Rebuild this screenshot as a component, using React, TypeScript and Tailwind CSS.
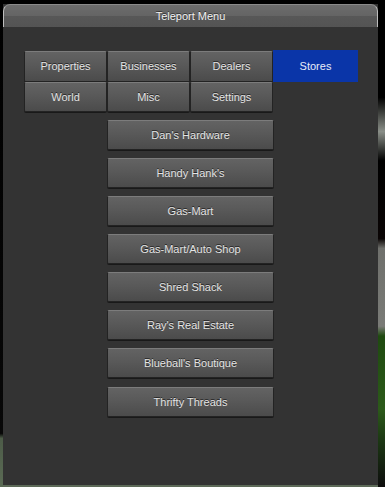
import React from "react";

const tabsRow1 = ["Properties", "Businesses", "Dealers"];
const tabsRow2 = ["World", "Misc", "Settings"];
const stores = [
  "Dan's Hardware",
  "Handy Hank's",
  "Gas-Mart",
  "Gas-Mart/Auto Shop",
  "Shred Shack",
  "Ray's Real Estate",
  "Blueball's Boutique",
  "Thrifty Threads",
];

const btn =
  "flex items-center justify-center rounded-[2px] border border-[#232323] border-t-[#7c7c7c] bg-[linear-gradient(to_bottom,#636363_0%,#595959_45%,#4b4b4b_100%)] text-[11px] text-[#e4e4e4] [text-shadow:0_-1px_0_rgba(0,0,0,0.6)] shadow-[0_1px_0_rgba(0,0,0,0.5)]";

export default function App() {
  return (
    <div
      className="w-[385px] h-[487px] overflow-hidden flex bg-[#4a5a44]"
      style={{ fontFamily: '"Liberation Sans", Arial, sans-serif' }}
    >
      <div className="w-[3px] h-full bg-[linear-gradient(to_bottom,#000_0%,#080808_89%,#4d5c48_90%,#5b6b55_100%)]" />
      <div className="flex flex-col">
        <div className="h-[4px] w-[375px] bg-black" />
        <div className="w-[375px] h-[481px] flex flex-col bg-[#333333]">
          <div className="h-[23px] flex items-center justify-center rounded-t-[7px] border-x border-t border-x-[#bdbdbd] border-t-[#8a8a8a] bg-[linear-gradient(to_bottom,#6c6c6c_0%,#646464_50%,#575757_52%,#545454_100%)] text-[11px] text-[#f2f2f2] [text-shadow:0_-1px_0_rgba(0,0,0,0.5)]">
            Teleport Menu
          </div>
          <div className="flex flex-col pl-[21px] pt-[24px]">
            <div className="flex">
              {tabsRow1.map((t) => (
                <div key={t} className={`${btn} w-[83px] h-[31px]`}>
                  {t}
                </div>
              ))}
              <div className="w-[85px] h-[32px] -mt-[1px] flex items-center justify-center bg-[#0a35a8] text-[11px] text-[#e8ecf8]">
                Stores
              </div>
            </div>
            <div className="flex">
              {tabsRow2.map((t) => (
                <div key={t} className={`${btn} w-[83px] h-[30px]`}>
                  {t}
                </div>
              ))}
            </div>
            <div className="flex flex-col gap-[8px] pl-[83px] mt-[8px]">
              {stores.map((s, i) => (
                <div
                  key={s}
                  className={`${btn} w-[167px] h-[30px] ${i === 7 ? "mt-[1px]" : ""}`}
                >
                  {s}
                </div>
              ))}
            </div>
          </div>
        </div>
        <div className="h-[2px] w-[375px] bg-[#5d6a58]" />
      </div>
      <div className="w-[7px] h-full bg-[linear-gradient(to_bottom,#000_0%,#000_20%,#8a8f88_27%,#000_33%,#0a0505_49%,#6f706c_51%,#7a7b77_67%,#1f4a10_69%,#2c5a1a_84%,#1d3a14_90%,#0d0d0d_100%)]" />
    </div>
  );
}
